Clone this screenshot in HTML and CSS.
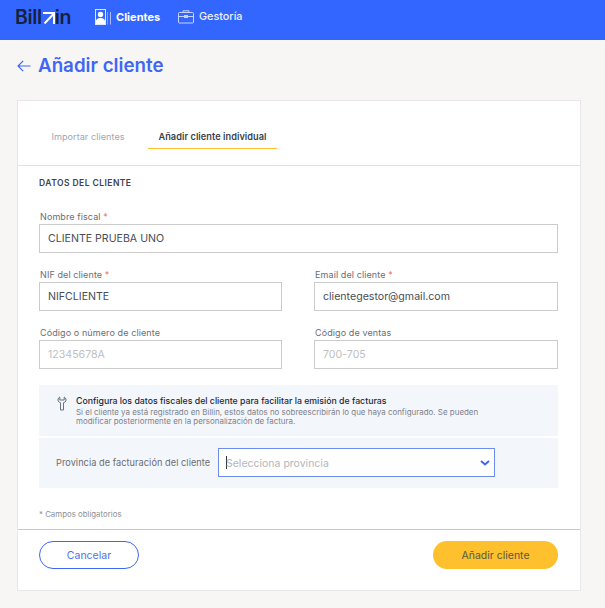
FILE: index.html
```html
<!DOCTYPE html>
<html lang="es">
<head>
<meta charset="utf-8">
<title>Añadir cliente</title>
<link rel="stylesheet" href="styles.css">
</head>
<body>
<header class="topbar">
  <div class="logo"><span>Bill</span><svg class="logo-arrow" width="12" height="12" viewBox="0 0 12 12"><path d="M0 1h11v11M1.500 11.500 10.500 2" fill="none" stroke="#fff" stroke-width="2"/></svg><span>in</span></div>
  <nav class="nav">
    <a class="nav-item active">
      <svg width="16" height="16" viewBox="0 0 16 16"><rect x=".5" y=".5" width="10" height="15" fill="none" stroke="#dfe6ff"/><circle cx="5.500" cy="5.500" r="2.700" fill="#fff"/><path d="M1 15v-3c0-2 2-3 4.500-3s4.500 1 4.500 3v3z" fill="#fff"/><path d="M12.500 3v12.500" stroke="#7f9dff"/><path d="M15.500 3v12.500" stroke="#aabfff"/></svg>
      <span>Clientes</span>
    </a>
    <a class="nav-item">
      <svg width="16" height="14" viewBox="0 0 16 14" fill="none" stroke="#c6d3ff"><rect x=".5" y="2.500" width="15" height="10.500" rx="1"/><path d="M5 2.500V.8h6v1.700M.5 6.500h15"/><rect x="6.500" y="5.500" width="3" height="2" fill="#c6d3ff"/></svg>
      <span>Gestoría</span>
    </a>
  </nav>
</header>

<main class="page">
  <div class="title-row">
    <svg width="14" height="12" viewBox="0 0 14 12" fill="none" stroke="#3f66f5" stroke-width="1.200"><path d="M13.500 6H1M6.200.8 1 6l5.200 5.200"/></svg>
    <h1>Añadir cliente</h1>
  </div>

  <section class="card">
    <div class="tabs">
      <div class="tab">Importar clientes</div>
      <div class="tab selected">Añadir cliente individual</div>
    </div>
    <div class="form">
      <h2>DATOS DEL CLIENTE</h2>
      <div class="field name-field">
        <label>Nombre fiscal <em>*</em></label>
        <div class="input">CLIENTE PRUEBA UNO</div>
      </div>
      <div class="row">
        <div class="field">
          <label>NIF del cliente <em>*</em></label>
          <div class="input">NIFCLIENTE</div>
        </div>
        <div class="field">
          <label>Email del cliente <em>*</em></label>
          <div class="input">clientegestor@gmail.com</div>
        </div>
      </div>
      <div class="row">
        <div class="field">
          <label>Código o número de cliente</label>
          <div class="input placeholder">12345678A</div>
        </div>
        <div class="field">
          <label>Código de ventas</label>
          <div class="input placeholder">700-705</div>
        </div>
      </div>
      <div class="fiscal">
        <div class="fiscal-info">
          <svg width="10" height="15" viewBox="0 0 10 15" fill="none" stroke="#6b7280"><path d="M2.800 1C1 2 .8 3.800 1.200 5c.4 1 1.300 1.500 2.300 1.700V14h3V6.700C7.500 6.500 8.500 6 8.800 5 9.200 3.800 9 2 7.200 1v3H2.800z"/></svg>
          <div>
            <strong>Configura los datos fiscales del cliente para facilitar la emisión de facturas</strong>
            <p>Si el cliente ya está registrado en Billin, estos datos no sobreescribirán lo que haya configurado. Se pueden modificar posteriormente en la personalización de factura.</p>
          </div>
        </div>
        <div class="fiscal-province">
          <span class="province-label">Provincia de facturación del cliente</span>
          <div class="select">
            <span class="caret"></span><span class="select-text">Selecciona provincia</span>
            <svg width="10" height="6" viewBox="0 0 10 6" fill="none" stroke="#3f66f5" stroke-width="2"><path d="M1 1l4 3.500L9 1"/></svg>
          </div>
        </div>
      </div>
      <p class="required-note">* Campos obligatorios</p>
    </div>
    <div class="actions">
      <button class="btn btn-cancel">Cancelar</button>
      <button class="btn btn-add">Añadir cliente</button>
    </div>
  </section>
</main>
</body>
</html>
```
FILE: styles.css
```css
* { box-sizing: border-box; }
html, body { margin: 0; padding: 0; height: 608px; overflow: hidden; }
body { background: #f7f6f4; font-family: Inter, "Liberation Sans", sans-serif; color: #3a3f4b; }

.topbar { height: 40px; background: #3366ff; display: flex; align-items: center; padding: 0 0 7px 15px; }
.logo { display: flex; align-items: center; width: 80px; height: 33px; color: #16213f; font-size: 19.500px; font-weight: 600; letter-spacing: -.35px; }
.logo-arrow { margin: 2px 0 0 1px; }
.nav { display: flex; align-items: center; }
.nav-item { display: flex; align-items: center; color: #fff; font-size: 11px; }
.nav-item:first-child { width: 83px; gap: 5px; font-weight: 700; }
.nav-item:last-child { gap: 5px; color: #eef2ff; font-weight: 500; font-size: 10.800px; }

.page { padding: 0 24px 0 17px; }
.title-row { height: 60px; display: flex; align-items: center; gap: 7px; padding-bottom: 9px; }
h1 { margin: 0; color: #3f66f5; font-size: 18.750px; font-weight: 600; }

.card { width: 564px; height: 491px; background: #fff; border: 1px solid #e8e8ec; }
.tabs { height: 65px; border-bottom: 1px solid #e2e2e4; padding: 21px 0 0 14px; display: flex; align-items: flex-start; gap: 4px; }
.tab { padding: 9px 0 0; height: 27px; font-size: 9.100px; color: #a2a6b1; font-weight: 400; width: 112px; text-align: center; letter-spacing: .05px; }
.tab.selected { width: 129px; color: #3a3f4b; font-weight: 600; font-size: 9.200px; border-bottom: 1px solid #fdbf2d; }

.form { padding: 11px 22px 0 21px; }
h2 { margin: 0; font-size: 8.500px; line-height: 12px; font-weight: 600; color: #3c4354; letter-spacing: .45px; }
label { display: block; font-size: 9px; line-height: 12px; color: #6b6e76; padding-left: 1px; margin-bottom: 1px; letter-spacing: .1px; }
label em { color: #f0705a; font-style: normal; }
.name-field { margin-top: 22px; }
.row { display: grid; grid-template-columns: 243px 244px; column-gap: 32px; margin-top: 16px; }
.input { height: 29px; border: 1px solid #cbcbcb; padding-left: 8px; display: flex; align-items: center; font-size: 10.600px; color: #4a4d56; }
.input.placeholder { color: #c0c0c4; }

.fiscal { margin-top: 16px; background: #f3f6fb; height: 103px; }
.fiscal-info { height: 53px; border-bottom: 2px solid #fff; display: flex; padding: 11px 0 0 18px; gap: 9px; }
.fiscal-info svg { flex: none; }
.fiscal-info strong { display: block; font-size: 8.750px; line-height: 11px; font-weight: 500; color: #22283a; }
.fiscal-info p { margin: 1px 0 0; font-size: 7.950px; line-height: 9px; color: #7e828c; width: 420px; }
.fiscal-province { display: flex; align-items: center; padding: 10px 0 0 17px; }
.province-label { width: 162px; font-size: 9.200px; color: #6b6e76; letter-spacing: .05px; }
.select { width: 277px; height: 29px; background: #fff; border: 1px solid #6d8cf2; display: flex; align-items: center; padding: 0 4px 0 7px; }
.caret { width: 1px; height: 13px; background: #333; margin-right: -1px; }
.select-text { flex: 1; padding-top: 1px; font-size: 10.500px; color: #b4b6bb; }

.required-note { margin: 21px 0 0; font-size: 7.850px; line-height: 10px; color: #8c8f96; }

.actions { margin-top: 10px; border-top: 1px solid #c9c6d0; display: flex; justify-content: space-between; padding: 11px 22px 0 21px; }
.btn { height: 28px; border-radius: 14px; font-family: inherit; font-size: 10.500px; padding: 0; }
.btn-cancel { width: 100px; background: #fff; border: 1px solid #3f66f5; color: #4f70f0; }
.btn-add { width: 125px; background: #fec02d; border: 0; color: #5c5643; }
```
